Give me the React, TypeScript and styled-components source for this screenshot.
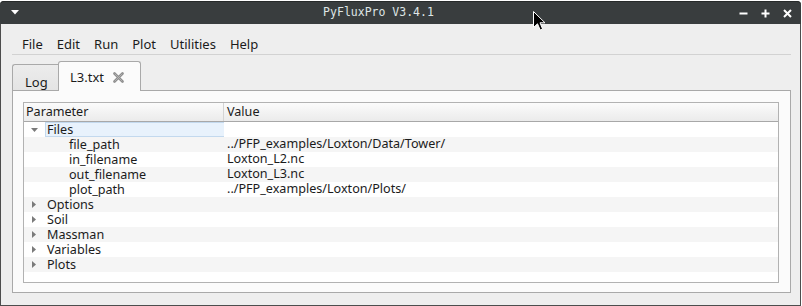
import React from 'react';
import styled, { createGlobalStyle } from 'styled-components';

const Global = createGlobalStyle`
  html, body { margin: 0; padding: 0; background: #ffffff; }
  body { width: 802px; height: 306px; overflow: hidden; font-family: "Noto Sans", sans-serif; }
  * { box-sizing: border-box; }
`;

const Window = styled.div`
  position: relative;
  margin-top: 1px;
  width: 801px;
  height: 305px;
  display: flex;
  flex-direction: column;
`;

const TitleBar = styled.div`
  height: 23px;
  flex: none;
  display: flex;
  align-items: center;
  background: #393d3e;
  border-radius: 4px 4px 0 0;
  box-shadow: inset 0 1px 0 #272a2a;
`;

const TitleLeft = styled.div`
  width: 28px;
  height: 100%;
  display: flex;
  align-items: center;
  padding-left: 11px;
`;

const TitleText = styled.div`
  flex: 1;
  text-align: center;
  font-family: "DejaVu Sans Mono", monospace;
  font-size: 11.5px;
  color: #dfe5e5;
  line-height: 23px;
`;

const TitleRight = styled.div`
  width: 72px;
  height: 100%;
  display: flex;
  justify-content: flex-end;
  align-items: center;
  padding-right: 3px;
`;

const TitleButton = styled.div`
  width: 22px;
  height: 100%;
  display: flex;
  align-items: center;
  justify-content: center;
  padding-top: 2px;
`;

const Body = styled.div`
  flex: 1;
  display: flex;
  flex-direction: column;
  background: #eeeeee;
  border: 1px solid #4d4d4d;
  border-top: none;
  padding: 0 9px 12px 11px;
`;

const MenuBar = styled.div`
  display: flex;
  padding: 11px 0 1px 3px;
  border-bottom: 1px solid #d2d2d2;
`;

const MenuItem = styled.div`
  padding: 0 7px;
  font-size: 13px;
  line-height: 18px;
  color: #1b1b1b;
`;

const TabBar = styled.div`
  margin-top: 6px;
  height: 29px;
  display: flex;
  align-items: flex-end;
  position: relative;
  z-index: 1;
`;

const Tab = styled.div<{ $active?: boolean }>`
  display: flex;
  align-items: center;
  font-size: 13px;
  color: #1b1b1b;
  border: 1px solid #a9a9a9;
  border-bottom: none;
  border-radius: 3px 3px 0 0;
  ${(p) =>
    p.$active
      ? `
    height: 30px;
    margin-bottom: -1px;
    padding: 1px 16px 0 11px;
    background: #fbfbfb;
    gap: 9px;
  `
      : `
    height: 26px;
    width: 46px;
    padding: 9px 0 0 12px;
    border-right: none;
    border-radius: 3px 0 0 0;
    background: linear-gradient(#ececec, #e4e4e4);
  `}
`;

const Pane = styled.div`
  flex: 1;
  display: flex;
  flex-direction: column;
  background: #fbfbfb;
  border: 1px solid #a9a9a9;
  padding: 11px 11px 9px 10px;
`;

const Tree = styled.div`
  flex: 1;
  display: flex;
  flex-direction: column;
  background: #ffffff;
  border: 1px solid #b2b2b2;
`;

const Header = styled.div`
  display: flex;
  height: 19px;
  background: linear-gradient(#fbfbfb, #ebebeb);
  border-bottom: 1px solid #a8a8a8;
  font-size: 12.6px;
  line-height: 18px;
  color: #1b1b1b;
`;

const HeaderCell = styled.div<{ $first?: boolean }>`
  ${(p) =>
    p.$first
      ? `width: 200px; padding-left: 2px; border-right: 1px solid #d4d4d4;`
      : `flex: 1; padding-left: 3px;`}
`;

const Row = styled.div<{ $alt?: boolean }>`
  display: flex;
  height: 15px;
  background: ${(p) => (p.$alt ? '#f5f5f5' : '#ffffff')};
  font-size: 12.6px;
  line-height: 14px;
  color: #1b1b1b;
`;

const NameCell = styled.div<{ $child?: boolean }>`
  width: 200px;
  display: flex;
  align-items: center;
  padding-left: ${(p) => (p.$child ? '43px' : '7px')};
`;

const Arrow = styled.div<{ $open?: boolean }>`
  width: 14px;
  height: 15px;
  display: flex;
  align-items: center;
  flex: none;
  padding-left: ${(p) => (p.$open ? '0' : '1px')};
`;

const Label = styled.div<{ $selected?: boolean }>`
  white-space: nowrap;
  ${(p) =>
    p.$selected
      ? `flex: 1; align-self: stretch; padding-left: 1px; background: #e8f2fc; border: 1px solid #c3d9ee; border-right: none; line-height: 13px;`
      : `padding-left: 2px;`}
`;

const ValueCell = styled.div`
  flex: 1;
  padding-left: 3px;
  white-space: nowrap;
`;

const Cursor = styled.svg`
  position: absolute;
  left: 533px;
  top: 10px;
`;

const DownTri = () => (
  <svg width="8" height="5" viewBox="0 0 8 5">
    <polygon points="0,0 8,0 4,4.5" fill="#ffffff" />
  </svg>
);

const TreeArrow = ({ open }: { open?: boolean }) =>
  open ? (
    <svg width="7" height="4" viewBox="0 0 7 4">
      <polygon points="0,0 7,0 3.5,4" fill="#7a7a7a" />
    </svg>
  ) : (
    <svg width="4" height="7" viewBox="0 0 4 7">
      <polygon points="0,0 4,3.5 0,7" fill="#7a7a7a" />
    </svg>
  );

const CloseIcon = () => (
  <svg width="11" height="11" viewBox="0 0 11 11">
    <path d="M1.5 1.5 L9.5 9.5 M9.5 1.5 L1.5 9.5" stroke="#8e8e8e" strokeWidth="2.6" strokeLinecap="round" />
    <path d="M2 2 L9 9 M9 2 L2 9" stroke="#b4b4b4" strokeWidth="0.9" strokeLinecap="round" />
  </svg>
);

const children = [
  ['file_path', '../PFP_examples/Loxton/Data/Tower/'],
  ['in_filename', 'Loxton_L2.nc'],
  ['out_filename', 'Loxton_L3.nc'],
  ['plot_path', '../PFP_examples/Loxton/Plots/'],
];

const groups = ['Options', 'Soil', 'Massman', 'Variables', 'Plots'];

export default function App() {
  let idx = 1;
  return (
    <>
      <Global />
      <Window>
        <TitleBar>
          <TitleLeft>
            <DownTri />
          </TitleLeft>
          <TitleText>PyFluxPro V3.4.1</TitleText>
          <TitleRight>
            <TitleButton>
              <svg width="9" height="9" viewBox="0 0 9 9">
                <rect x="0.5" y="3.5" width="8" height="2" fill="#ffffff" />
              </svg>
            </TitleButton>
            <TitleButton>
              <svg width="9" height="9" viewBox="0 0 9 9">
                <rect x="0.5" y="3.5" width="8" height="2" fill="#ffffff" />
                <rect x="3.5" y="0.5" width="2" height="8" fill="#ffffff" />
              </svg>
            </TitleButton>
            <TitleButton>
              <svg width="9" height="9" viewBox="0 0 9 9">
                <path d="M1 1 L8 8 M8 1 L1 8" stroke="#ffffff" strokeWidth="2" />
              </svg>
            </TitleButton>
          </TitleRight>
        </TitleBar>
        <Body>
          <MenuBar>
            {['File', 'Edit', 'Run', 'Plot', 'Utilities', 'Help'].map((m) => (
              <MenuItem key={m}>{m}</MenuItem>
            ))}
          </MenuBar>
          <TabBar>
            <Tab>Log</Tab>
            <Tab $active>
              <span>L3.txt</span>
              <CloseIcon />
            </Tab>
          </TabBar>
          <Pane>
            <Tree>
              <Header>
                <HeaderCell $first>Parameter</HeaderCell>
                <HeaderCell>Value</HeaderCell>
              </Header>
              <Row>
                <NameCell>
                  <Arrow $open>
                    <TreeArrow open />
                  </Arrow>
                  <Label $selected>Files</Label>
                </NameCell>
                <ValueCell />
              </Row>
              {children.map(([k, v]) => (
                <Row key={k} $alt={idx++ % 2 === 1}>
                  <NameCell $child>
                    <Label>{k}</Label>
                  </NameCell>
                  <ValueCell>{v}</ValueCell>
                </Row>
              ))}
              {groups.map((g) => (
                <Row key={g} $alt={idx++ % 2 === 1}>
                  <NameCell>
                    <Arrow>
                      <TreeArrow />
                    </Arrow>
                    <Label>{g}</Label>
                  </NameCell>
                  <ValueCell />
                </Row>
              ))}
            </Tree>
          </Pane>
        </Body>
        <Cursor width="13" height="20" viewBox="0 0 13 20">
          <polygon
            points="0.5,0.5 0.5,16.5 4.5,12.8 7.2,19 9.6,18 7,11.8 12,11.8"
            fill="#000000"
            stroke="#ffffff"
            strokeWidth="1"
            strokeLinejoin="round"
          />
        </Cursor>
      </Window>
    </>
  );
}
